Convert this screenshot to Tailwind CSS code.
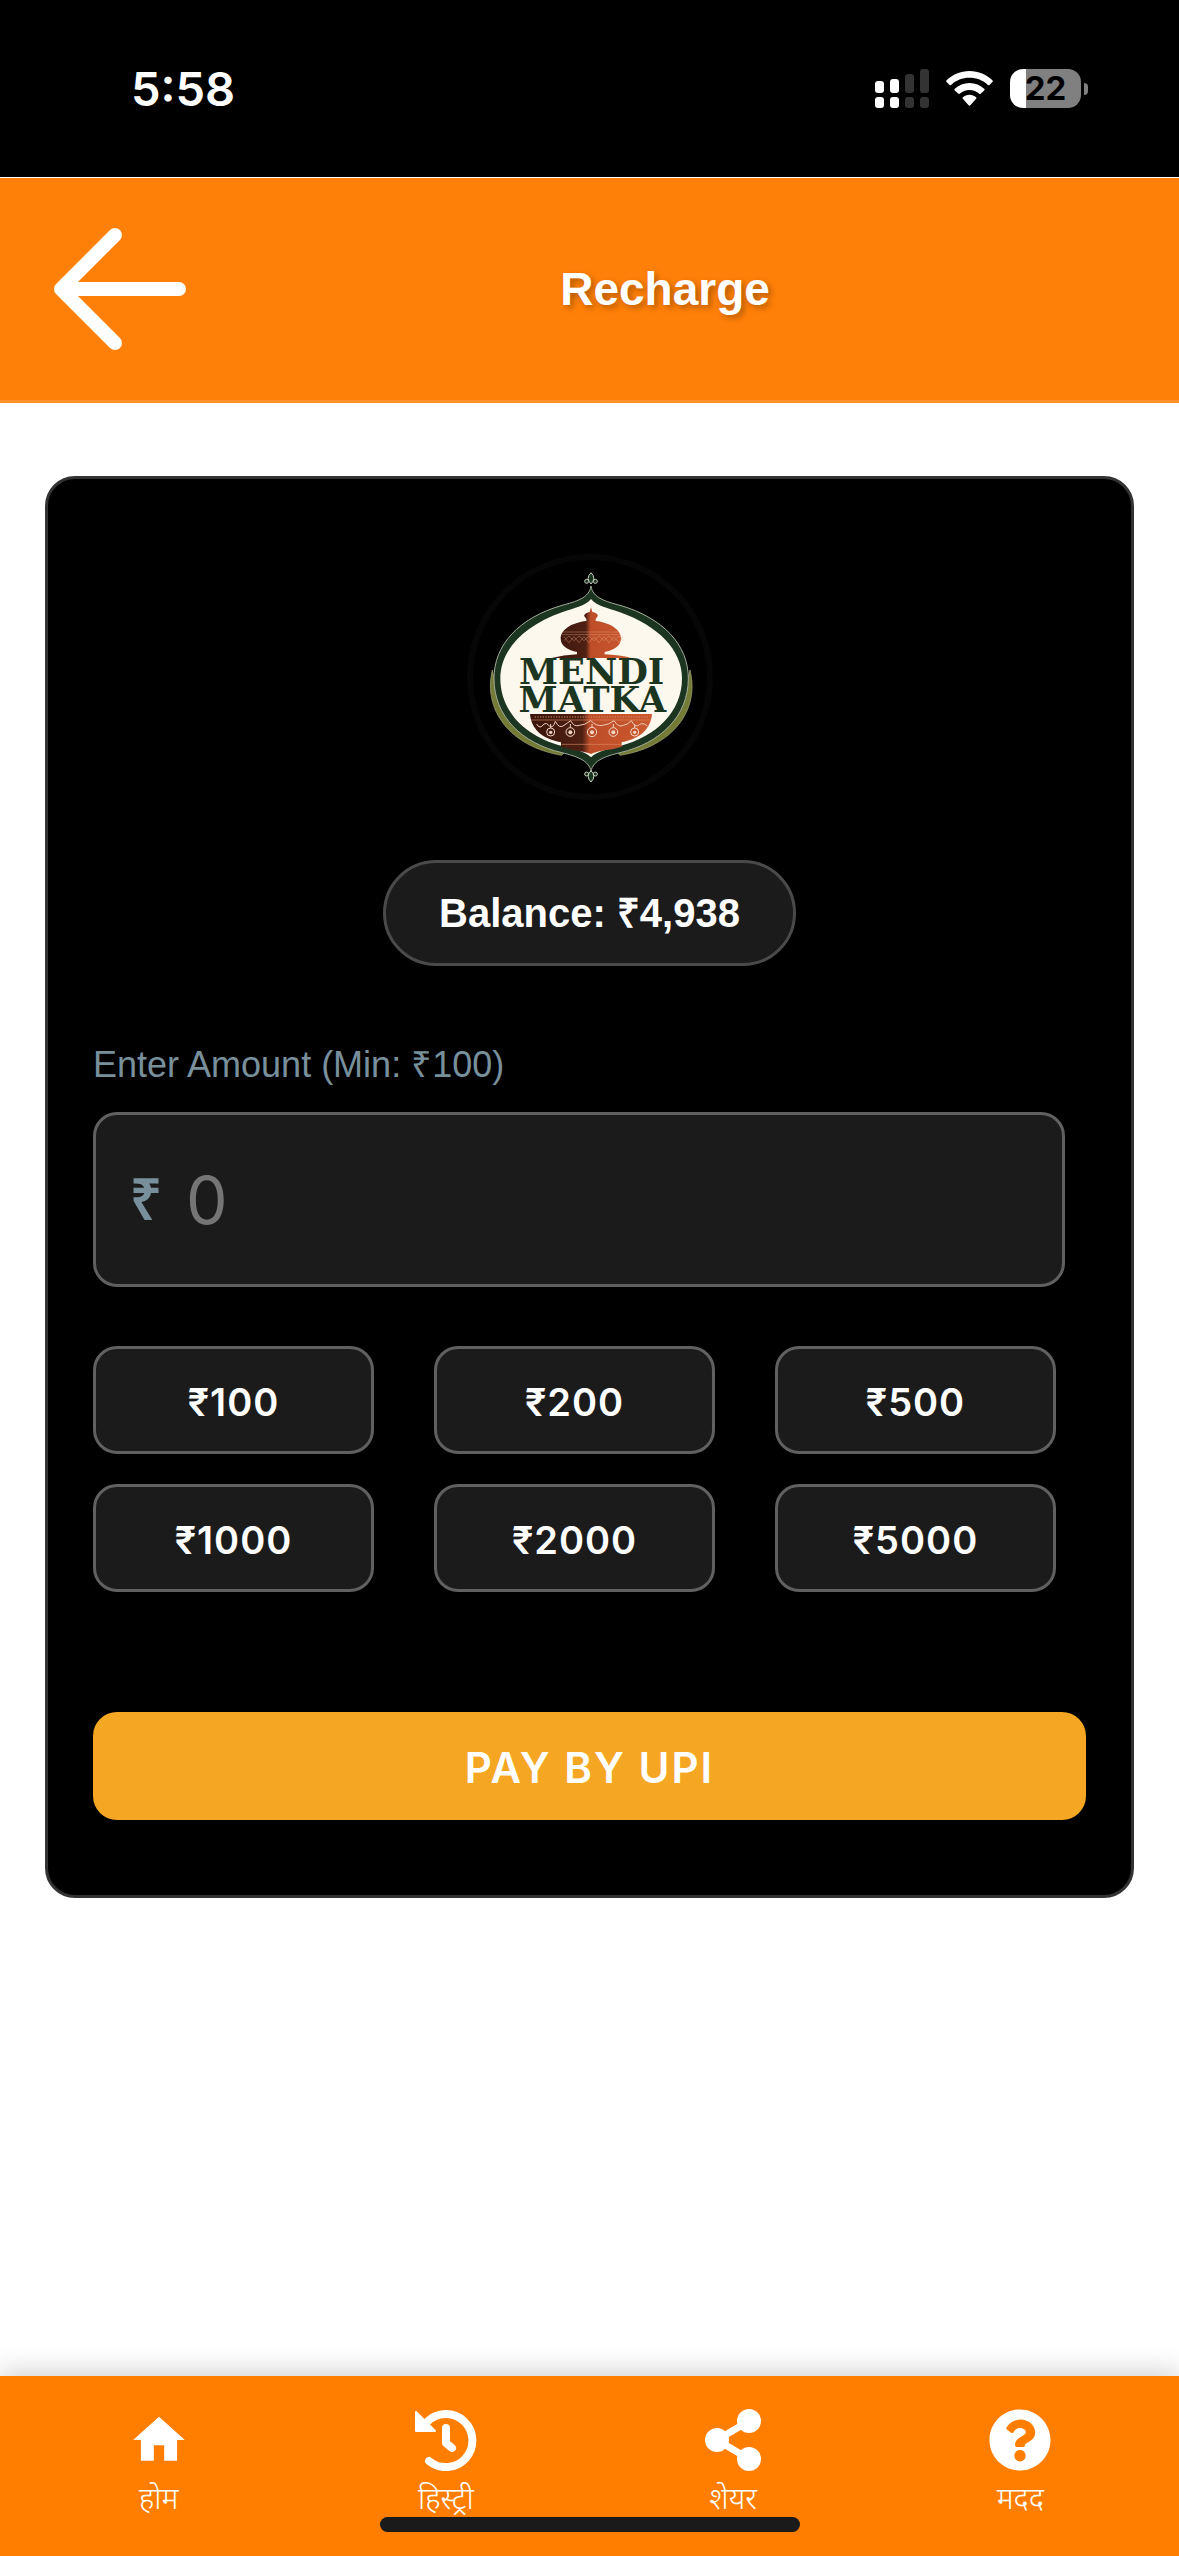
<!DOCTYPE html>
<html lang="hi">
<head>
    <meta charset="UTF-8">
    <meta name="viewport" content="width=device-width, initial-scale=1.0">
    <title>Recharge - Mendi Matka</title>
    <script src="https://cdn.jsdelivr.net/npm/@tailwindcss/browser@4"></script>
</head>
<body class="bg-white font-['Liberation_Sans',Arial,sans-serif]">
<div class="min-h-screen flex flex-col">

    <!-- STATUS BAR -->
    <div class="h-[177px] bg-black flex items-center justify-between pl-[131px] pr-[91px]">
        <span class="text-white text-[47px] leading-none font-semibold font-['Inter',sans-serif]">5:58</span>
        <div class="flex items-center gap-[17px]">
            <svg class="w-[54px] h-[39px]" viewBox="0 0 54 39" fill="#fff">
                <rect x="0" y="12" width="9" height="12" rx="3"/>
                <rect x="15" y="10" width="9" height="14" rx="3"/>
                <rect x="30" y="5" width="9" height="19" rx="3" fill="#333"/>
                <rect x="45" y="0" width="9" height="24" rx="3" fill="#333"/>
                <rect x="0" y="28" width="9" height="11" rx="3"/>
                <rect x="15" y="28" width="9" height="11" rx="3"/>
                <rect x="30" y="28" width="9" height="11" rx="3" fill="#333"/>
                <rect x="45" y="28" width="9" height="11" rx="3" fill="#333"/>
            </svg>
            <svg class="w-[47px] h-[35px]" viewBox="0 0 47 35" fill="#fff">
                <path d="M23.500 0C14.600 0 6.500 3.500 .6 9.300q-.8.900 0 1.700l2.900 2.900q.8.700 1.600 0C9.900 9.400 16.400 6.800 23.500 6.800s13.600 2.600 18.400 7.100q.8.700 1.600 0l2.900-2.900q.8-.8 0-1.700C40.500 3.500 32.400 0 23.500 0z"/>
                <path d="M23.500 11.900c-5.700 0-10.900 2.200-14.700 5.800q-.9.900 0 1.700l3.300 3.200q.8.700 1.600.1c2.600-2.400 6-3.800 9.800-3.800s7.200 1.400 9.800 3.800q.8.600 1.600-.1l3.300-3.200q.9-.8 0-1.700c-3.800-3.600-9-5.800-14.700-5.800z"/>
                <path d="M23.500 23.700c-2.500 0-4.800.9-6.600 2.500q-.8.800 0 1.600l5.700 6.500q.9.900 1.800 0l5.700-6.500q.8-.8 0-1.600c-1.800-1.600-4.100-2.500-6.600-2.500z"/>
            </svg>
            <div class="flex items-center gap-[3px]">
                <div class="w-[71px] h-[39px] rounded-[13px] bg-linear-to-r from-white from-[16px] to-[#808080] to-[16px] text-[33px] leading-[39px] font-bold text-black text-center font-['Inter',sans-serif]">22</div>
                <div class="w-[4px] h-[12px] rounded-r-full bg-[#808080]"></div>
            </div>
        </div>
    </div>

    <!-- HEADER -->
    <header class="mt-px h-[225px] bg-[#ff8008] border-b-3 border-[#ff912b] flex items-center px-[45px]">
        <a href="#" aria-label="Back" class="w-[151px]">
            <svg class="w-[151px] h-[132px]" viewBox="0 0 151 132" fill="none" stroke="#fff" stroke-width="14" stroke-linecap="round" stroke-linejoin="round">
                <path d="M134 66H16M70 12L16 66l54 54"/>
            </svg>
        </a>
        <h1 class="flex-1 text-center text-white text-[46px] leading-[54px] font-bold [text-shadow:3px_3px_6px_rgba(0,0,0,0.3)]">Recharge</h1>
    </header>

    <!-- RECHARGE CARD -->
    <main class="flex-1">
        <section class="mx-[45px] mt-[73px] bg-black border-3 border-[#333] rounded-[30px] px-[45px] py-[75px] flex flex-col">
            <svg class="self-center w-[246px] h-[246px]" viewBox="81 72 738 738">
                <defs>
                    <linearGradient id="clay" x1="0" x2="1">
                        <stop offset="0" stop-color="#3a160c"/>
                        <stop offset=".43" stop-color="#4f2013"/>
                        <stop offset=".49" stop-color="#bd4e29"/>
                        <stop offset="1" stop-color="#cb582e"/>
                    </linearGradient>
                </defs>
                <circle cx="450" cy="441" r="360" fill="none" stroke="#060606" stroke-width="18"/>
                <!-- olive outer edges -->
                <path d="M157 420C128 540 210 650 365 676L380 660C260 640 180 560 157 420zM750 420C780 540 700 650 540 676L525 660C650 640 725 560 750 420z" fill="#747b35" stroke="#a9ab80" stroke-width="2"/>
                <!-- pointed frame -->
                <path d="M453 168C458 205 500 215 540 226C670 264 745 345 745 445C745 560 660 640 540 668C500 678 458 690 453 725C448 690 406 678 366 668C246 640 162 560 162 445C162 345 236 264 366 226C406 215 448 205 453 168z" fill="#1b3521" stroke="#a3ab9a" stroke-width="3"/>
                <path d="M453 207C470 228 505 234 540 247C655 288 726 360 726 445C726 545 650 620 540 648C505 657 470 664 453 682C436 664 401 657 366 648C256 620 181 545 181 445C181 360 251 288 366 247C401 234 436 228 453 207z" fill="#fcf8ee"/>
                <g fill="#1b3521" stroke="#c8cdc0" stroke-width="3">
                    <path d="M453 128q-17 17 0 34q17-17 0-34z"/>
                    <circle cx="440" cy="154" r="6"/><circle cx="466" cy="154" r="6"/>
                    <path d="M453 756q-17-17 0-34q17 17 0 34z"/>
                    <circle cx="440" cy="732" r="6"/><circle cx="466" cy="732" r="6"/>
                </g>
                <!-- lid -->
                <path d="M453 232L457 246Q470 248 474 257L467 267V273C510 278 543 298 543 326C543 348 520 360 494 366V373Q540 375 574 384H335Q370 375 411 373V366C385 360 362 348 362 326C362 298 396 278 439 273V267L432 257Q436 248 449 246z" fill="url(#clay)"/>
                <path d="M369 306H536M367 314H539M372 320l15 18 15-18 15 18 15-18 15 18 15-18 15 18 15-18 15 18 15-18 15 18 12-18M372 332l15-14 15 14 15-14 15 14 15-14 15 14 15-14 15 14 15-14 15 14 15-14 12 14" fill="none" stroke="#e5a784" stroke-opacity=".6" stroke-width="2"/>
                <!-- pot -->
                <path d="M270 552H636C632 596 603 625 545 637V650L516 658C480 662 462 668 453 672C444 668 426 664 398 660L363 650V637C303 625 274 596 270 552z" fill="url(#clay)"/>
                <path d="M274 570H633M365 643H543" stroke="#dd8f68" stroke-opacity=".6" stroke-width="3"/>
                <path d="M284 561H625" stroke="#dd8f68" stroke-opacity=".6" stroke-width="4" stroke-dasharray="4 4"/>
                <path d="M290 582q9 18 22 0q8-6 16 6q10 10 18-14q12 24 26 12q12-8 20-14q10 20 26 14q16 0 34-14q18 18 36 14q20-2 34-14q14 22 28 14q14-2 24-14q12 24 24 12q10-8 24 4" fill="none" stroke="#f0cbb5" stroke-width="3"/>
                <g fill="none" stroke="#f2d6c4" stroke-width="3">
                    <circle cx="332" cy="606" r="12"/><circle cx="391" cy="606" r="13"/><circle cx="456" cy="606" r="14"/><circle cx="520" cy="606" r="13"/><circle cx="584" cy="606" r="12"/>
                    <path d="M332 582v12M391 582v10M456 582v10M520 582v10M584 582v12"/>
                </g>
                <g fill="#f2d6c4">
                    <circle cx="332" cy="607" r="5"/><circle cx="391" cy="607" r="6"/><circle cx="456" cy="607" r="6"/><circle cx="520" cy="607" r="6"/><circle cx="584" cy="607" r="5"/>
                </g>
                <text fill="#1b3521" font-family="DejaVu Serif, serif" font-weight="bold" font-size="106" text-anchor="middle">
                    <tspan x="455" y="463">MENDI</tspan><tspan x="457" y="546">MATKA</tspan>
                </text>
            </svg>

            <div class="self-center mt-[60px] h-[106px] px-[53px] flex items-center bg-[#1b1b1b] border-3 border-[#4a4a4a] rounded-full text-white text-[40px] font-bold">Balance: ₹4,938</div>

            <label for="amount" class="mt-[72px] text-[36px] leading-[54px] text-[#78909c]">Enter Amount (Min: ₹100)</label>
            <div class="mt-[20px] mr-[21px] h-[175px] flex items-center bg-[#1b1b1b] border-3 border-[#606060] rounded-[24px] px-[34px]">
                <span class="w-[56px] text-[56px] leading-none font-bold text-[#78909c]">₹</span>
                <input id="amount" type="text" inputmode="numeric" placeholder="0" class="flex-1 min-w-0 h-full bg-transparent outline-none text-white placeholder:text-[#757575] text-[66px] font-['Inter',sans-serif]">
            </div>

            <div class="mt-[59px] mr-[30px] grid grid-cols-3 gap-x-[60px] gap-y-[30px] text-white text-[38px] font-semibold tracking-[1px] font-['Inter',sans-serif]">
                <button type="button" class="h-[108px] pt-[4px] bg-[#1b1b1b] border-3 border-[#606060] rounded-[24px]">₹100</button>
                <button type="button" class="h-[108px] pt-[4px] bg-[#1b1b1b] border-3 border-[#606060] rounded-[24px]">₹200</button>
                <button type="button" class="h-[108px] pt-[4px] bg-[#1b1b1b] border-3 border-[#606060] rounded-[24px]">₹500</button>
                <button type="button" class="h-[108px] pt-[4px] bg-[#1b1b1b] border-3 border-[#606060] rounded-[24px]">₹1000</button>
                <button type="button" class="h-[108px] pt-[4px] bg-[#1b1b1b] border-3 border-[#606060] rounded-[24px]">₹2000</button>
                <button type="button" class="h-[108px] pt-[4px] bg-[#1b1b1b] border-3 border-[#606060] rounded-[24px]">₹5000</button>
            </div>

            <button type="submit" class="mt-[120px] h-[108px] pt-[2px] bg-[#f5a623] rounded-[24px] text-white text-[42px] font-semibold tracking-[2px] font-['Inter',sans-serif]">PAY BY UPI</button>
        </section>
    </main>

    <!-- BOTTOM NAVIGATION -->
    <nav class="relative h-[180px] bg-[#ff7e00] px-[15px] pt-[33px] grid grid-cols-4 shadow-[0_-6px_24px_rgba(0,0,0,0.17)] text-white text-[30px] leading-[62px] font-light font-['Noto_Sans_Devanagari','Noto_Sans',sans-serif]">
        <a href="#" class="flex flex-col items-center">
            <svg class="w-[62px] h-[62px]" viewBox="0 0 24 24" fill="#fff"><path d="M10 20v-6h4v6h5v-8h3L12 3 2 12h3v8z"/></svg>
            <span>होम</span>
        </a>
        <a href="#" class="flex flex-col items-center">
            <svg class="w-[62px] h-[62px]" viewBox="0 0 62 62" fill="none" stroke="#fff" stroke-width="8" stroke-linecap="round" stroke-linejoin="round">
                <path d="M12 13A26.500 26.500 0 1 1 14 52"/>
                <path d="M31 19v15l6 5"/>
                <path d="M1 3v19h19z" fill="#fff" stroke-width="2"/>
            </svg>
            <span>हिस्ट्री</span>
        </a>
        <a href="#" class="flex flex-col items-center">
            <svg class="w-[62px] h-[62px]" viewBox="0 0 62 62" fill="#fff">
                <circle cx="47" cy="12" r="12"/><circle cx="15" cy="31" r="12"/><circle cx="47" cy="50" r="12"/>
                <path d="M47 12L15 31l32 19" fill="none" stroke="#fff" stroke-width="7"/>
            </svg>
            <span>शेयर</span>
        </a>
        <a href="#" class="flex flex-col items-center">
            <svg class="w-[62px] h-[62px]" viewBox="4 4 504 504" fill="#fff"><path d="M504 256c0 136.997-111.043 248-248 248S8 392.997 8 256C8 119.083 119.043 8 256 8s248 111.083 248 248zM262.655 90c-54.497 0-89.255 22.957-116.549 63.758-3.536 5.286-2.353 12.415 2.715 16.258l34.699 26.310c5.205 3.947 12.621 3.008 16.665-2.122 17.864-22.658 30.113-35.797 57.303-35.797 20.429 0 45.698 13.148 45.698 32.958 0 14.976-12.363 22.667-32.534 33.976C247.128 238.528 216 254.941 216 296v4c0 6.627 5.373 12 12 12h56c6.627 0 12-5.373 12-12v-1.333c0-28.462 83.186-29.647 83.186-106.667 0-58.002-60.165-102-116.531-102zM256 338c-25.365 0-46 20.635-46 46 0 25.364 20.635 46 46 46s46-20.636 46-46c0-25.365-20.635-46-46-46z"/></svg>
            <span>मदद</span>
        </a>
        <!-- home indicator -->
        <div class="absolute bottom-[24px] left-1/2 -translate-x-1/2 w-[420px] h-[15px] rounded-full bg-[#1a1a1a]"></div>
    </nav>

</div>
</body>
</html>
